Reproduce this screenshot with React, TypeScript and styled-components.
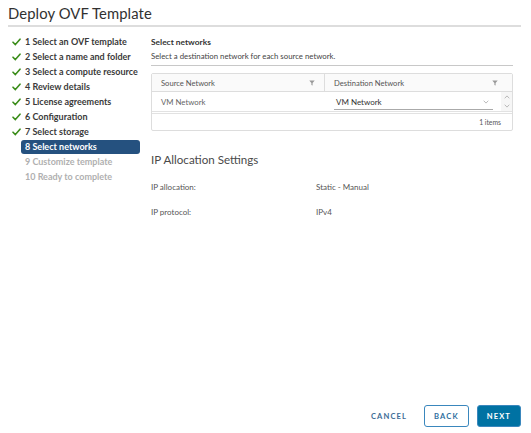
import React from 'react'
import styled, { createGlobalStyle } from 'styled-components'

const Global = createGlobalStyle`
    html, body {
        margin: 0;
        padding: 0;
        background: #fff;
    }
    body {
        font-family: Lato, "Open Sans", sans-serif;
        color: #333;
    }
`

const Page = styled.div`
    width: 531px;
    height: 433px;
    display: flex;
    flex-direction: column;
    box-sizing: border-box;
`
const Header = styled.div`
    margin: 0 10px 0 8px;
    height: 25px;
    border-bottom: 2px solid #ddd;
    display: flex;
    align-items: center;
`
const Title = styled.h1`
    margin: 0;
    font-weight: 400;
    font-size: 14.8px;
    color: #313131;
    letter-spacing: 0.1px;
`
const Body = styled.div`
    flex-grow: 1;
    display: flex;
`
const Sidebar = styled.div`
    width: 140px;
    flex-shrink: 0;
    padding-top: 7px;
    display: flex;
    flex-direction: column;
`
const Step = styled.div`
    height: 15px;
    display: flex;
    align-items: center;
    padding-left: 12px;
    font-size: 9px;
    font-weight: 700;
    color: ${props => props.disabled ? '#b0b0b0' : '#3a3a3a'};
`
const CheckSlot = styled.span`
    width: 9px;
    margin-right: 4px;
    display: flex;
    align-items: center;
`
const StepLabel = styled.span`
    flex-grow: 1;
    height: 14px;
    line-height: 14px;
    padding-left: 4px;
    margin-left: -4px;
    border-radius: 3px;
    white-space: nowrap;
    background: ${props => props.active ? '#25517f' : 'transparent'};
    color: ${props => props.active ? '#fff' : 'inherit'};
`
const Main = styled.div`
    flex-grow: 1;
    padding: 0 18px 0 11px;
    display: flex;
    flex-direction: column;
`
const SectionTitle = styled.div`
    margin-top: 9px;
    font-size: 8.4px;
    font-weight: 700;
    color: #333;
    height: 13px;
    line-height: 13px;
`
const Description = styled.div`
    font-size: 7.8px;
    color: #444;
    height: 15px;
    line-height: 15px;
    padding-bottom: 1px;
    border-bottom: 1px solid #c8c8c8;
`
const Grid = styled.div`
    margin-top: 7px;
    border: 1px solid #ddd;
    border-radius: 2px;
    font-size: 7.6px;
`
const GridHead = styled.div`
    display: grid;
    grid-template-columns: 172px 1fr;
    height: 17px;
    background: #fafafa;
    border-bottom: 1px solid #ddd;
    color: #555;
`
const HeadCell = styled.div`
    display: flex;
    align-items: center;
    justify-content: space-between;
    padding: 0 ${props => props.last ? '14px' : '9px'} 0 9px;
    border-left: ${props => props.last ? '1px solid #ddd' : 'none'};
`
const GridRow = styled.div`
    display: grid;
    grid-template-columns: 172px 1fr 11px;
    height: 19px;
    border-bottom: 3px double #e2e2e2;
`
const Cell = styled.div`
    display: flex;
    align-items: center;
    padding-left: 9px;
    color: #666;
    font-size: 7.8px;
`
const SelectCell = styled.div`
    display: flex;
    align-items: center;
    padding-left: 10px;
`
const Select = styled.div`
    width: 159px;
    height: 15px;
    display: flex;
    align-items: center;
    justify-content: space-between;
    border-bottom: 1px solid #aaa;
    padding: 0 4px 0 2px;
    box-sizing: border-box;
    color: #333;
    font-size: 8px;
    margin-top: 2px;
`
const Scroll = styled.div`
    display: flex;
    flex-direction: column;
    align-items: center;
    justify-content: space-between;
    padding: 3px 0;
    background: #f6f6f6;
    box-sizing: border-box;
`
const GridFoot = styled.div`
    height: 16px;
    display: flex;
    align-items: center;
    justify-content: flex-end;
    padding-right: 11px;
    font-size: 6.8px;
    color: #555;
`
const Subheading = styled.div`
    margin-top: 21px;
    font-size: 11.6px;
    color: #4a4a4a;
    height: 16px;
    line-height: 16px;
`
const Props = styled.div`
    margin-top: 12px;
    display: grid;
    grid-template-columns: 165px 1fr;
    row-gap: 11px;
    font-size: 8px;
    color: #555;
`
const PropCell = styled.div`
    height: 14px;
    line-height: 14px;
`
const Footer = styled.div`
    height: 40px;
    display: flex;
    align-items: flex-end;
    justify-content: flex-end;
    gap: 8px;
    padding: 0 10px 6px 0;
    box-sizing: border-box;
`
const Button = styled.button`
    height: 22px;
    min-width: 44px;
    padding: 0 ${props => props.variant === 'link' ? '8px' : '9px'};
    border-radius: 3px;
    font-family: Lato, "Open Sans", sans-serif;
    font-size: 7.6px;
    font-weight: 700;
    letter-spacing: 1.1px;
    text-transform: uppercase;
    border: 1px solid ${props => props.variant === 'link' ? 'transparent' : '#3a87bd'};
    background: ${props => props.variant === 'primary' ? '#0072a3' : '#fff'};
    color: ${props => props.variant === 'primary' ? '#fff' : props.variant === 'link' ? '#3d6c96' : '#2f6fa0'};
`

const Check = () => (
    <svg width="9" height="8" viewBox="0 0 9 8">
        <path d="M1 4.2 L3.4 6.6 L8 1.2" fill="none" stroke="#3b8d1a" strokeWidth="1.6" strokeLinecap="round" strokeLinejoin="round" />
    </svg>
)

const Funnel = () => (
    <svg width="6" height="6" viewBox="0 0 6 6">
        <path d="M0.3 0.6 H5.7 L3.6 3 V5.6 L2.4 5 V3 Z" fill="#999" />
    </svg>
)

const Chevron = ({ up }: { up?: boolean }) => (
    <svg width="6" height="4" viewBox="0 0 6 4">
        <path d={up ? 'M0.7 3.3 L3 0.9 L5.3 3.3' : 'M0.7 0.7 L3 3.1 L5.3 0.7'} fill="none" stroke="#aaa" strokeWidth="0.8" />
    </svg>
)

const steps = [
    '1 Select an OVF template',
    '2 Select a name and folder',
    '3 Select a compute resource',
    '4 Review details',
    '5 License agreements',
    '6 Configuration',
    '7 Select storage',
    '8 Select networks',
    '9 Customize template',
    '10 Ready to complete',
]
const current = 7

export default function App() {
    return <>
        <Global />
        <Page>
            <Header>
                <Title>Deploy OVF Template</Title>
            </Header>
            <Body>
                <Sidebar>
                    {steps.map((s, i) => (
                        <Step key={s} disabled={i > current}>
                            <CheckSlot>{i < current ? <Check /> : null}</CheckSlot>
                            <StepLabel active={i === current}>{s}</StepLabel>
                        </Step>
                    ))}
                </Sidebar>
                <Main>
                    <SectionTitle>Select networks</SectionTitle>
                    <Description>Select a destination network for each source network.</Description>
                    <Grid>
                        <GridHead>
                            <HeadCell>Source Network<Funnel /></HeadCell>
                            <HeadCell last>Destination Network<Funnel /></HeadCell>
                        </GridHead>
                        <GridRow>
                            <Cell>VM Network</Cell>
                            <SelectCell>
                                <Select>VM Network<Chevron /></Select>
                            </SelectCell>
                            <Scroll>
                                <Chevron up />
                                <Chevron />
                            </Scroll>
                        </GridRow>
                        <GridFoot>1 items</GridFoot>
                    </Grid>
                    <Subheading>IP Allocation Settings</Subheading>
                    <Props>
                        <PropCell>IP allocation:</PropCell>
                        <PropCell>Static - Manual</PropCell>
                        <PropCell>IP protocol:</PropCell>
                        <PropCell>IPv4</PropCell>
                    </Props>
                </Main>
            </Body>
            <Footer>
                <Button variant="link">Cancel</Button>
                <Button>Back</Button>
                <Button variant="primary">Next</Button>
            </Footer>
        </Page>
    </>
}
